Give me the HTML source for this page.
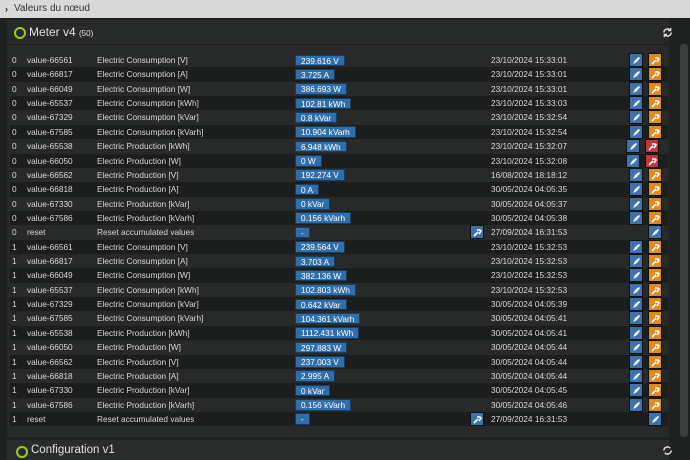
<!DOCTYPE html><html><head><meta charset="utf-8"><style>
*{margin:0;padding:0;box-sizing:border-box}
body{width:690px;height:453px;overflow:hidden;background:#1f2020;font-family:"Liberation Sans",sans-serif;color:#d8d8d8;position:relative}
.top{position:absolute;left:0;top:0;width:690px;height:18px;background:#d9d9d9;color:#333;font-size:10px;line-height:18px;padding-left:14px}
.top b{position:absolute;left:5px;top:0;font-size:9px;color:#222}
.p{position:absolute;left:7px;top:20px;width:662px;height:417px;background:#282929}
.hd{position:absolute;left:0;top:0;width:662px;height:25px;border-bottom:1px solid #1c1c1c}
.ring{position:absolute;left:7px;top:7px;width:12px;height:12px;border:2px solid #9acd1e;border-radius:50%}
.ttl{position:absolute;left:22px;top:5px;font-size:12px;color:#e0e0e0}
.ttl small{font-size:8px}
.rows{position:absolute;left:3px;top:33px;width:658px}
.r{height:14.36px;position:relative;font-size:8.3px;line-height:14.36px;white-space:nowrap}
.r:nth-child(even){background:#1c1d1d}
.r span{position:absolute}
.a{left:2px}.n{left:17px}.l{left:87px}.d{left:481px}
.v{left:285px;top:1.5px;height:11.5px;line-height:11.5px;background:#2f6ea8;color:#fff;padding:0 5px;border:1px solid #1a3d5e}
.btn{top:0;width:14px;height:14px;border:1px solid #111}
.bb{background:#3d73ad}.bo{background:#de8a1f}.br{background:#c6343b}
.btn svg{position:absolute;left:2px;top:2px}
.sb{position:absolute;left:680px;top:44px;width:8px;height:393px;background:#3b3c3c;border-radius:3px}
.p2{position:absolute;left:7px;top:440px;width:662px;height:20px;background:#2a2b2b}
</style></head><body>
<div class="top"><b>›</b>Valeurs du nœud</div>
<div class="p">
<div class="hd"><div class="ring"></div><div class="ttl">Meter v4 <small>(50)</small></div>
<svg style="position:absolute;left:655px;top:7px" width="11" height="11" viewBox="0 0 12 12"><path d="M2 6a4 4 0 0 1 7-2.5M10 6a4 4 0 0 1-7 2.5" stroke="#ddd" stroke-width="1.6" fill="none"/><path d="M9.5 1v3h-3M2.5 11V8h3" stroke="#ddd" stroke-width="1.4" fill="none"/></svg></div>
<div class="rows">
<div class="r"><span class="a">0</span><span class="n">value-66561</span><span class="l">Electric Consumption [V]</span><span class="v">239.616 V</span><span class="d">23/10/2024 15:33:01</span><span class="btn bb" style="left:619px"><svg width="9" height="9"><path d="M1 8l2-4 4-3 1 1-3 4z" fill="#fff"/></svg></span><span class="btn bo" style="left:638px"><svg width="9" height="9"><path d="M1 8l4-4M4 2l3 0 1 1-2 3" stroke="#fff" stroke-width="1.6" fill="none"/></svg></span></div>
<div class="r"><span class="a">0</span><span class="n">value-66817</span><span class="l">Electric Consumption [A]</span><span class="v">3.725 A</span><span class="d">23/10/2024 15:33:01</span><span class="btn bb" style="left:619px"><svg width="9" height="9"><path d="M1 8l2-4 4-3 1 1-3 4z" fill="#fff"/></svg></span><span class="btn bo" style="left:638px"><svg width="9" height="9"><path d="M1 8l4-4M4 2l3 0 1 1-2 3" stroke="#fff" stroke-width="1.6" fill="none"/></svg></span></div>
<div class="r"><span class="a">0</span><span class="n">value-66049</span><span class="l">Electric Consumption [W]</span><span class="v">386.693 W</span><span class="d">23/10/2024 15:33:01</span><span class="btn bb" style="left:619px"><svg width="9" height="9"><path d="M1 8l2-4 4-3 1 1-3 4z" fill="#fff"/></svg></span><span class="btn bo" style="left:638px"><svg width="9" height="9"><path d="M1 8l4-4M4 2l3 0 1 1-2 3" stroke="#fff" stroke-width="1.6" fill="none"/></svg></span></div>
<div class="r"><span class="a">0</span><span class="n">value-65537</span><span class="l">Electric Consumption [kWh]</span><span class="v">102.81 kWh</span><span class="d">23/10/2024 15:33:03</span><span class="btn bb" style="left:619px"><svg width="9" height="9"><path d="M1 8l2-4 4-3 1 1-3 4z" fill="#fff"/></svg></span><span class="btn bo" style="left:638px"><svg width="9" height="9"><path d="M1 8l4-4M4 2l3 0 1 1-2 3" stroke="#fff" stroke-width="1.6" fill="none"/></svg></span></div>
<div class="r"><span class="a">0</span><span class="n">value-67329</span><span class="l">Electric Consumption [kVar]</span><span class="v">0.8 kVar</span><span class="d">23/10/2024 15:32:54</span><span class="btn bb" style="left:619px"><svg width="9" height="9"><path d="M1 8l2-4 4-3 1 1-3 4z" fill="#fff"/></svg></span><span class="btn bo" style="left:638px"><svg width="9" height="9"><path d="M1 8l4-4M4 2l3 0 1 1-2 3" stroke="#fff" stroke-width="1.6" fill="none"/></svg></span></div>
<div class="r"><span class="a">0</span><span class="n">value-67585</span><span class="l">Electric Consumption [kVarh]</span><span class="v">10.904 kVarh</span><span class="d">23/10/2024 15:32:54</span><span class="btn bb" style="left:619px"><svg width="9" height="9"><path d="M1 8l2-4 4-3 1 1-3 4z" fill="#fff"/></svg></span><span class="btn bo" style="left:638px"><svg width="9" height="9"><path d="M1 8l4-4M4 2l3 0 1 1-2 3" stroke="#fff" stroke-width="1.6" fill="none"/></svg></span></div>
<div class="r"><span class="a">0</span><span class="n">value-65538</span><span class="l">Electric Production [kWh]</span><span class="v">6.948 kWh</span><span class="d">23/10/2024 15:32:07</span><span class="btn bb" style="left:616px"><svg width="9" height="9"><path d="M1 8l2-4 4-3 1 1-3 4z" fill="#fff"/></svg></span><span class="btn br" style="left:635px"><svg width="9" height="9"><path d="M1 8l4-4M4 2l3 0 1 1-2 3" stroke="#fff" stroke-width="1.6" fill="none"/></svg></span></div>
<div class="r"><span class="a">0</span><span class="n">value-66050</span><span class="l">Electric Production [W]</span><span class="v">0 W</span><span class="d">23/10/2024 15:32:08</span><span class="btn bb" style="left:616px"><svg width="9" height="9"><path d="M1 8l2-4 4-3 1 1-3 4z" fill="#fff"/></svg></span><span class="btn br" style="left:635px"><svg width="9" height="9"><path d="M1 8l4-4M4 2l3 0 1 1-2 3" stroke="#fff" stroke-width="1.6" fill="none"/></svg></span></div>
<div class="r"><span class="a">0</span><span class="n">value-66562</span><span class="l">Electric Production [V]</span><span class="v">192.274 V</span><span class="d">16/08/2024 18:18:12</span><span class="btn bb" style="left:619px"><svg width="9" height="9"><path d="M1 8l2-4 4-3 1 1-3 4z" fill="#fff"/></svg></span><span class="btn bo" style="left:638px"><svg width="9" height="9"><path d="M1 8l4-4M4 2l3 0 1 1-2 3" stroke="#fff" stroke-width="1.6" fill="none"/></svg></span></div>
<div class="r"><span class="a">0</span><span class="n">value-66818</span><span class="l">Electric Production [A]</span><span class="v">0 A</span><span class="d">30/05/2024 04:05:35</span><span class="btn bb" style="left:619px"><svg width="9" height="9"><path d="M1 8l2-4 4-3 1 1-3 4z" fill="#fff"/></svg></span><span class="btn bo" style="left:638px"><svg width="9" height="9"><path d="M1 8l4-4M4 2l3 0 1 1-2 3" stroke="#fff" stroke-width="1.6" fill="none"/></svg></span></div>
<div class="r"><span class="a">0</span><span class="n">value-67330</span><span class="l">Electric Production [kVar]</span><span class="v">0 kVar</span><span class="d">30/05/2024 04:05:37</span><span class="btn bb" style="left:619px"><svg width="9" height="9"><path d="M1 8l2-4 4-3 1 1-3 4z" fill="#fff"/></svg></span><span class="btn bo" style="left:638px"><svg width="9" height="9"><path d="M1 8l4-4M4 2l3 0 1 1-2 3" stroke="#fff" stroke-width="1.6" fill="none"/></svg></span></div>
<div class="r"><span class="a">0</span><span class="n">value-67586</span><span class="l">Electric Production [kVarh]</span><span class="v">0.156 kVarh</span><span class="d">30/05/2024 04:05:38</span><span class="btn bb" style="left:619px"><svg width="9" height="9"><path d="M1 8l2-4 4-3 1 1-3 4z" fill="#fff"/></svg></span><span class="btn bo" style="left:638px"><svg width="9" height="9"><path d="M1 8l4-4M4 2l3 0 1 1-2 3" stroke="#fff" stroke-width="1.6" fill="none"/></svg></span></div>
<div class="r"><span class="a">0</span><span class="n">reset</span><span class="l">Reset accumulated values</span><span class="v">-</span><span class="btn bb" style="left:460px"><svg width="9" height="9"><path d="M1 8l4-4M4 2l3 0 1 1-2 3" stroke="#fff" stroke-width="1.6" fill="none"/></svg></span><span class="d">27/09/2024 16:31:53</span><span class="btn bb" style="left:638px"><svg width="9" height="9"><path d="M1 8l2-4 4-3 1 1-3 4z" fill="#fff"/></svg></span></div>
<div class="r"><span class="a">1</span><span class="n">value-66561</span><span class="l">Electric Consumption [V]</span><span class="v">239.564 V</span><span class="d">23/10/2024 15:32:53</span><span class="btn bb" style="left:619px"><svg width="9" height="9"><path d="M1 8l2-4 4-3 1 1-3 4z" fill="#fff"/></svg></span><span class="btn bo" style="left:638px"><svg width="9" height="9"><path d="M1 8l4-4M4 2l3 0 1 1-2 3" stroke="#fff" stroke-width="1.6" fill="none"/></svg></span></div>
<div class="r"><span class="a">1</span><span class="n">value-66817</span><span class="l">Electric Consumption [A]</span><span class="v">3.703 A</span><span class="d">23/10/2024 15:32:53</span><span class="btn bb" style="left:619px"><svg width="9" height="9"><path d="M1 8l2-4 4-3 1 1-3 4z" fill="#fff"/></svg></span><span class="btn bo" style="left:638px"><svg width="9" height="9"><path d="M1 8l4-4M4 2l3 0 1 1-2 3" stroke="#fff" stroke-width="1.6" fill="none"/></svg></span></div>
<div class="r"><span class="a">1</span><span class="n">value-66049</span><span class="l">Electric Consumption [W]</span><span class="v">382.136 W</span><span class="d">23/10/2024 15:32:53</span><span class="btn bb" style="left:619px"><svg width="9" height="9"><path d="M1 8l2-4 4-3 1 1-3 4z" fill="#fff"/></svg></span><span class="btn bo" style="left:638px"><svg width="9" height="9"><path d="M1 8l4-4M4 2l3 0 1 1-2 3" stroke="#fff" stroke-width="1.6" fill="none"/></svg></span></div>
<div class="r"><span class="a">1</span><span class="n">value-65537</span><span class="l">Electric Consumption [kWh]</span><span class="v">102.803 kWh</span><span class="d">23/10/2024 15:32:53</span><span class="btn bb" style="left:619px"><svg width="9" height="9"><path d="M1 8l2-4 4-3 1 1-3 4z" fill="#fff"/></svg></span><span class="btn bo" style="left:638px"><svg width="9" height="9"><path d="M1 8l4-4M4 2l3 0 1 1-2 3" stroke="#fff" stroke-width="1.6" fill="none"/></svg></span></div>
<div class="r"><span class="a">1</span><span class="n">value-67329</span><span class="l">Electric Consumption [kVar]</span><span class="v">0.642 kVar</span><span class="d">30/05/2024 04:05:39</span><span class="btn bb" style="left:619px"><svg width="9" height="9"><path d="M1 8l2-4 4-3 1 1-3 4z" fill="#fff"/></svg></span><span class="btn bo" style="left:638px"><svg width="9" height="9"><path d="M1 8l4-4M4 2l3 0 1 1-2 3" stroke="#fff" stroke-width="1.6" fill="none"/></svg></span></div>
<div class="r"><span class="a">1</span><span class="n">value-67585</span><span class="l">Electric Consumption [kVarh]</span><span class="v">104.361 kVarh</span><span class="d">30/05/2024 04:05:41</span><span class="btn bb" style="left:619px"><svg width="9" height="9"><path d="M1 8l2-4 4-3 1 1-3 4z" fill="#fff"/></svg></span><span class="btn bo" style="left:638px"><svg width="9" height="9"><path d="M1 8l4-4M4 2l3 0 1 1-2 3" stroke="#fff" stroke-width="1.6" fill="none"/></svg></span></div>
<div class="r"><span class="a">1</span><span class="n">value-65538</span><span class="l">Electric Production [kWh]</span><span class="v">1112.431 kWh</span><span class="d">30/05/2024 04:05:41</span><span class="btn bb" style="left:619px"><svg width="9" height="9"><path d="M1 8l2-4 4-3 1 1-3 4z" fill="#fff"/></svg></span><span class="btn bo" style="left:638px"><svg width="9" height="9"><path d="M1 8l4-4M4 2l3 0 1 1-2 3" stroke="#fff" stroke-width="1.6" fill="none"/></svg></span></div>
<div class="r"><span class="a">1</span><span class="n">value-66050</span><span class="l">Electric Production [W]</span><span class="v">297.883 W</span><span class="d">30/05/2024 04:05:44</span><span class="btn bb" style="left:619px"><svg width="9" height="9"><path d="M1 8l2-4 4-3 1 1-3 4z" fill="#fff"/></svg></span><span class="btn bo" style="left:638px"><svg width="9" height="9"><path d="M1 8l4-4M4 2l3 0 1 1-2 3" stroke="#fff" stroke-width="1.6" fill="none"/></svg></span></div>
<div class="r"><span class="a">1</span><span class="n">value-66562</span><span class="l">Electric Production [V]</span><span class="v">237.003 V</span><span class="d">30/05/2024 04:05:44</span><span class="btn bb" style="left:619px"><svg width="9" height="9"><path d="M1 8l2-4 4-3 1 1-3 4z" fill="#fff"/></svg></span><span class="btn bo" style="left:638px"><svg width="9" height="9"><path d="M1 8l4-4M4 2l3 0 1 1-2 3" stroke="#fff" stroke-width="1.6" fill="none"/></svg></span></div>
<div class="r"><span class="a">1</span><span class="n">value-66818</span><span class="l">Electric Production [A]</span><span class="v">2.995 A</span><span class="d">30/05/2024 04:05:44</span><span class="btn bb" style="left:619px"><svg width="9" height="9"><path d="M1 8l2-4 4-3 1 1-3 4z" fill="#fff"/></svg></span><span class="btn bo" style="left:638px"><svg width="9" height="9"><path d="M1 8l4-4M4 2l3 0 1 1-2 3" stroke="#fff" stroke-width="1.6" fill="none"/></svg></span></div>
<div class="r"><span class="a">1</span><span class="n">value-67330</span><span class="l">Electric Production [kVar]</span><span class="v">0 kVar</span><span class="d">30/05/2024 04:05:45</span><span class="btn bb" style="left:619px"><svg width="9" height="9"><path d="M1 8l2-4 4-3 1 1-3 4z" fill="#fff"/></svg></span><span class="btn bo" style="left:638px"><svg width="9" height="9"><path d="M1 8l4-4M4 2l3 0 1 1-2 3" stroke="#fff" stroke-width="1.6" fill="none"/></svg></span></div>
<div class="r"><span class="a">1</span><span class="n">value-67586</span><span class="l">Electric Production [kVarh]</span><span class="v">0.156 kVarh</span><span class="d">30/05/2024 04:05:46</span><span class="btn bb" style="left:619px"><svg width="9" height="9"><path d="M1 8l2-4 4-3 1 1-3 4z" fill="#fff"/></svg></span><span class="btn bo" style="left:638px"><svg width="9" height="9"><path d="M1 8l4-4M4 2l3 0 1 1-2 3" stroke="#fff" stroke-width="1.6" fill="none"/></svg></span></div>
<div class="r"><span class="a">1</span><span class="n">reset</span><span class="l">Reset accumulated values</span><span class="v">-</span><span class="btn bb" style="left:460px"><svg width="9" height="9"><path d="M1 8l4-4M4 2l3 0 1 1-2 3" stroke="#fff" stroke-width="1.6" fill="none"/></svg></span><span class="d">27/09/2024 16:31:53</span><span class="btn bb" style="left:638px"><svg width="9" height="9"><path d="M1 8l2-4 4-3 1 1-3 4z" fill="#fff"/></svg></span></div>
</div>
</div>
<div class="sb"></div>
<div class="p2"><div class="ring" style="left:9px;top:6px"></div><div class="ttl" style="left:24px;top:4px;font-size:11.5px">Configuration v1</div>
<svg style="position:absolute;left:655px;top:5px" width="11" height="11" viewBox="0 0 12 12"><path d="M2 6a4 4 0 0 1 7-2.5M10 6a4 4 0 0 1-7 2.5" stroke="#ddd" stroke-width="1.6" fill="none"/></svg></div>
</body></html>
